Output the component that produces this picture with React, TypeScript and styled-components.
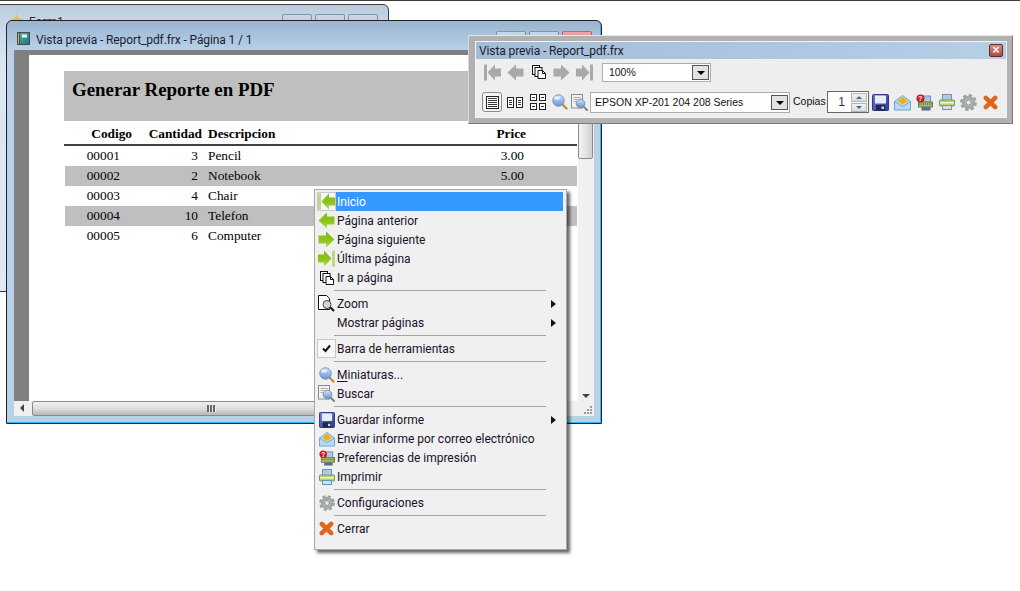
import React from "react";
import styled, { createGlobalStyle } from "styled-components";

const UI = `Roboto, "Open Sans", "Liberation Sans", sans-serif`;
const SANS = `"Liberation Sans", Arial, sans-serif`;
const SERIF = `"Liberation Serif", "Times New Roman", serif`;

const Global = createGlobalStyle`
  html, body { margin: 0; padding: 0; background: #fff; overflow: hidden; }
  * { box-sizing: border-box; }
`;

const Desktop = styled.div`
  position: relative;
  width: 1020px;
  height: 591px;
  overflow: hidden;
  background: #fff;
  font-family: ${UI};
  &::before { content: ""; position: absolute; left: 0; right: 0; top: 0; height: 1px; background: #3a3a3a; }
`;

const Defs = styled.svg`position: absolute; width: 0; height: 0;`;

/* Back window */
const BackWindow = styled.div`
  position: absolute;
  left: -8px; top: 4px; width: 397px; height: 288px;
  border: 1px solid #3c3c3c;
  border-radius: 6px 6px 0 0;
  background: linear-gradient(180deg, #bccbdc 0, #c9d8e8 18px, #d9e6f3 60px, #dde9f5 100%);
  display: flex;
  align-items: flex-start;
  padding: 9px 10px 0 17px;
`;
const BackIcon = styled.svg`width: 13px; height: 13px; flex: none;`;
const BackTitle = styled.span`margin-left: 6px; font-size: 12px; line-height: 16px; color: #333;`;
const CaptionButtons = styled.div<{ $lift?: number }>`
  margin-left: auto;
  margin-top: ${p => -(p.$lift ?? 0)}px;
  display: flex;
  gap: 3px;
  align-self: flex-start;
`;
const CaptionButton = styled.div<{ $close?: boolean }>`
  width: 30px; height: 19px;
  border: 1px solid ${p => (p.$close ? "#9a6a6a" : "#7f93a8")};
  border-top-color: ${p => (p.$close ? "#a87070" : "#8296ab")};
  border-radius: 2px 2px 3px 3px;
  background: ${p => (p.$close ? "linear-gradient(#e8a9a3, #d67a70)" : "linear-gradient(#c6d8ea, #a9c1da)")};
  display: flex; align-items: center; justify-content: center;
`;
const BackGlyph = styled.span`width: 10px; height: 8px; border: 1px solid #fff; border-top-width: 2px; margin-top: 3px;`;

/* Front window */
const FrontWindow = styled.div`
  position: absolute;
  left: 6px; top: 20px; width: 596px; height: 404px;
  border: 1px solid #222;
  border-radius: 6px 6px 0 0;
  background: linear-gradient(180deg, #9ab4d1 0, #b9d1e8 30px, #b9d1e8 100%);
  box-shadow: inset -1px -1px 0 #36b7e6;
  padding: 0 7px 7px;
  display: flex;
  flex-direction: column;
`;
const TitleBar = styled.div`
  height: 29px;
  flex: none;
  display: flex;
  align-items: flex-start;
  padding: 11px 2px 0 3px;
`;
const WindowTitle = styled.span`
  margin-left: 6px;
  font-size: 12px;
  line-height: 16px;
  letter-spacing: -0.11px;
  color: #1c1c30;
`;
const Client = styled.div`
  flex: 1;
  display: grid;
  grid-template-columns: 564px 16px;
  grid-template-rows: 351px 15px;
`;
const Viewport = styled.div`
  background: #808080;
  padding: 5px 0 0 15px;
  overflow: hidden;
`;
const Page = styled.div`
  height: 100%;
  background: #fff;
  padding: 16px 1px 0 35px;
`;
const Band = styled.div`
  height: 50px;
  background: #bfbfbf;
  padding: 8px 0 0 8px;
  font: bold 18.9px/21px ${SERIF};
  color: #000;
`;
const ReportRow = styled.div<{ $shaded?: boolean; $head?: boolean }>`
  display: grid;
  grid-template-columns: 68px 70px 294px 30px 1fr;
  height: ${p => (p.$head ? "25px" : "20px")};
  align-items: center;
  font: ${p => (p.$head ? "bold" : "normal")} 13.33px/16px ${SERIF};
  color: #000;
  background: ${p => (p.$shaded ? "#bfbfbf" : "#fff")};
  border-bottom: ${p => (p.$head ? "2px solid #404040" : "0")};
  margin-left: ${p => (p.$head ? "0" : "1px")};
  padding-top: ${p => (p.$head ? "2px" : "0")};
`;
const Cell = styled.span<{ $right?: boolean; $pad?: number; $lead?: number }>`
  text-align: ${p => (p.$right ? "right" : "left")};
  padding-right: ${p => p.$pad ?? 0}px;
  padding-left: ${p => p.$lead ?? 0}px;
`;
const VScroll = styled.div`
  background: #f0f0f0;
  display: flex;
  flex-direction: column;
  position: relative;
`;
const VThumb = styled.div`
  margin: 17px 0 0 0;
  height: 92px;
  width: 15px;
  border: 1px solid #8a8a8a;
  border-radius: 2px;
  background: linear-gradient(90deg, #f4f4f4, #e4e4e4 50%, #cfcfcf);
`;
const ScrollArrow = styled.span<{ $dir: "down" | "left" }>`
  width: 0; height: 0;
  ${p => p.$dir === "down"
    ? "border-left: 4px solid transparent; border-right: 4px solid transparent; border-top: 4px solid #444; margin: auto 0 3px 4px;"
    : "border-top: 4px solid transparent; border-bottom: 4px solid transparent; border-right: 4px solid #444; margin: 3px 0 0 6px;"}
`;
const HScroll = styled.div`
  background: #f0f0f0;
  display: flex;
  padding-right: 188px;
`;
const HThumb = styled.div`
  margin-left: 8px;
  flex: 1;
  height: 15px;
  border: 1px solid #8a8a8a;
  border-radius: 2px;
  background: linear-gradient(180deg, #f0f0f0, #dedede 50%, #b8b8b8);
  display: flex;
  justify-content: center;
  align-items: center;
  gap: 1px;
`;
const Grip = styled.i`display: block; width: 2px; height: 7px; background: #666; box-shadow: 1px 0 0 #eee;`;
const Corner = styled.div`
  background: #f0f0f0;
  display: flex;
  align-items: flex-end;
  justify-content: flex-end;
  padding: 0 1px 1px 0;
`;

/* Floating toolbar */
const ToolWindow = styled.div`
  position: absolute;
  left: 468px; top: 35px; width: 545px; height: 89px;
  background: #b1b1b1;
  border-right: 1px solid #7a7a7a;
  border-bottom: 1px solid #7a7a7a;
  border-top: 1px solid #e6e6e6;
  border-left: 1px solid #d8d8d8;
  padding: 6px 6px 6px 7px;
  display: flex;
  flex-direction: column;
`;
const ToolInner = styled.div`
  flex: 1;
  background: #eee;
  box-shadow: 0 0 0 1px #f4f4f4;
  display: flex;
  flex-direction: column;
`;
const ToolTitle = styled.div`
  height: 17px;
  flex: none;
  background: linear-gradient(90deg, #a3bcd8, #b6cfe7);
  display: flex;
  align-items: center;
  justify-content: space-between;
  padding: 0 3px;
  font-size: 12px;
  letter-spacing: -0.11px;
  color: #1c1c30;
`;
const ToolClose = styled.div`
  width: 14px; height: 13px;
  border: 1px solid #5a2f2c;
  border-radius: 2px;
  background: linear-gradient(#d88d84, #b5473e);
  display: flex; align-items: center; justify-content: center;
  color: #fff;
  font: bold 12px/9px ${SANS};
`;
const ToolRow = styled.div<{ $second?: boolean }>`
  display: flex;
  align-items: center;
  height: ${p => (p.$second ? "22px" : "20px")};
  margin-top: ${p => (p.$second ? "9px" : "3px")};
  padding-left: ${p => (p.$second ? "6px" : "8px")};
  gap: ${p => (p.$second ? "3px" : "6px")};
`;
const ToolIcon = styled.div<{ $active?: boolean; $w?: number }>`
  width: ${p => p.$w ?? 17}px;
  height: 20px;
  flex: none;
  display: flex;
  align-items: center;
  justify-content: center;
  border: ${p => (p.$active ? "1px solid #8a8a8a" : "0")};
  border-radius: 3px;
  background: ${p => (p.$active ? "#f2f2f2" : "transparent")};
`;
const Combo = styled.div<{ $w: number; $h: number; $gap?: number }>`
  width: ${p => p.$w}px;
  height: ${p => p.$h}px;
  margin-left: ${p => p.$gap ?? 0}px;
  flex: none;
  background: #fff;
  border: 1px solid #adadad;
  display: flex;
  align-items: center;
  justify-content: space-between;
  padding: 0 1px 0 3px;
  font: 10.5px/14px ${SANS};
  color: #111;
`;
const ComboWide = styled(Combo)`padding-left: 4px;`;
const DropButton = styled.div`
  width: 17px; height: 15px;
  border: 1px solid #555;
  background: #e2e2e2;
  display: flex; align-items: center; justify-content: center;
  padding-top: 2px;
  &::after { content: ""; border-left: 4px solid transparent; border-right: 4px solid transparent; border-top: 4px solid #000; }
`;
const CopiesLabel = styled.span`
  width: 32px;
  font: 10.5px/14px ${SANS};
  color: #111;
  flex: none;
  margin-top: -3px;
`;
const Spinner = styled.div`
  width: 42px; height: 22px;
  flex: none;
  margin-left: -1px;
  background: #fff;
  border: 1px solid #666;
  display: flex;
  align-items: center;
  justify-content: flex-end;
  font: 12px/14px ${SANS};
  color: #4a1a70;
  padding-right: 1px;
`;
const SpinValue = styled.span`margin-right: 6px;`;
const SpinStack = styled.div`display: flex; flex-direction: column; gap: 1px; width: 16px;`;
const SpinBtn = styled.div<{ $up?: boolean }>`
  height: 9px;
  background: linear-gradient(#f4f4f4, #dadada);
  border: 1px solid #b4b4b4;
  display: flex; align-items: center; justify-content: center;
  &::after {
    content: "";
    border-left: 3px solid transparent;
    border-right: 3px solid transparent;
    ${p => (p.$up ? "border-bottom: 3px solid #4a6a8a;" : "border-top: 3px solid #4a6a8a;")}
  }
`;
const ActionIcons = styled.div`
  display: flex;
  gap: 5px;
`;

/* Context menu */
const Menu = styled.div`
  position: absolute;
  left: 314px; top: 189px; width: 253px; height: 361px;
  background: #f0f0f0;
  border: 1px solid #a8a8a8;
  box-shadow: 3px 3px 3px rgba(0,0,0,.6);
  padding: 2px 3px 0 2px;
`;
const MenuRow = styled.div`
  height: 19px;
  display: flex;
  align-items: stretch;
`;
const MenuIconCell = styled.div<{ $boxed?: boolean }>`
  width: 19px;
  flex: none;
  display: flex;
  align-items: center;
  justify-content: center;
  border: ${p => (p.$boxed ? "1px solid #c9c9c9" : "0")};
  background: ${p => (p.$boxed ? "#f7f7f7" : "transparent")};
`;
const MenuLabel = styled.div<{ $active?: boolean }>`
  flex: 1;
  display: flex;
  align-items: center;
  justify-content: space-between;
  padding: 0 7px 0 1px;
  font-size: 12px;
  line-height: 16px;
  background: ${p => (p.$active ? "#3399ff" : "transparent")};
  color: ${p => (p.$active ? "#fff" : "#20102a")};
  u { text-underline-offset: 2px; }
`;
const SubCaret = styled.span`
  border-top: 4px solid transparent;
  border-bottom: 4px solid transparent;
  border-left: 5px solid #111;
`;
const MenuSep = styled.div`
  height: 7px;
  margin: 0 17px;
  display: flex;
  align-items: center;
  &::after { content: ""; flex: 1; height: 1px; background: #a4a4a4; }
`;

/* Icons */
type IconProps = { s?: number };
const NavArrow = ({ dir, bar, fill, barFill, s = 17 }: { dir: "l" | "r"; bar?: boolean; fill: string; barFill?: string; s?: number }) => (
  <svg width={s} height={s} viewBox="0 0 17 17">
    <g transform={dir === "l" ? "translate(17,0) scale(-1,1)" : undefined}>
      {bar ? (
        <>
          <polygon points="0,4.5 6,4.5 6,0.5 13.5,8.5 6,16.5 6,12.5 0,12.5" fill={fill} />
          <rect x="14" y="0.5" width="3" height="16" fill={barFill ?? fill} />
        </>
      ) : (
        <polygon points="0.5,4.5 8,4.5 8,0.5 16.5,8.5 8,16.5 8,12.5 0.5,12.5" fill={fill} />
      )}
    </g>
  </svg>
);
const GRAY = "#a9a9a9";
const GREEN = "url(#greenFill)";
const LIME = "#bcd88a";

const PagesIcon = ({ s = 14 }: IconProps) => (
  <svg width={s} height={s} viewBox="0 0 14 14" fill="#fff" stroke="#111" strokeWidth="1">
    <rect x="0.5" y="0.5" width="7" height="9" />
    <rect x="3" y="2.5" width="7" height="9" />
    <path d="M6 5.5h4.5l3 3v5h-7.5z" />
    <path d="M10.5 5.5v3h3" fill="none" />
  </svg>
);
const Glass = ({ s = 16 }: IconProps) => (
  <svg width={s} height={s} viewBox="0 0 16 16">
    <path d="M10.5 10.5l4 4" stroke="#c08a2a" strokeWidth="2.2" strokeLinecap="round" />
    <circle cx="6.5" cy="6.5" r="5.7" fill="url(#glassFill)" stroke="#6f93c6" strokeWidth="1" />
    <ellipse cx="5" cy="4" rx="3" ry="1.7" fill="#e4effa" />
  </svg>
);
const PreviewIcon = ({ s = 17 }: IconProps) => (
  <svg width={s} height={s} viewBox="0 0 17 17">
    <rect x="0.5" y="0.5" width="11" height="13.5" fill="#f2f2f2" stroke="#8a8a8a" />
    <path d="M2.5 3.5h7M2.5 5.5h4M2.5 7.5h3" stroke="#b0b0b0" />
    <path d="M12 12l4 4" stroke="#808080" strokeWidth="2" strokeLinecap="round" />
    <circle cx="9.5" cy="9.5" r="4.3" fill="url(#glassFill)" stroke="#7b8da6" />
  </svg>
);
const ZoomIcon = ({ s = 17 }: IconProps) => (
  <svg width={s} height={s} viewBox="0 0 17 17">
    <path d="M.5.5h8l3 3v11h-11z" fill="#fff" stroke="#111" />
    <path d="M12 12l4 4" stroke="#111" strokeWidth="2" />
    <circle cx="9" cy="9.5" r="4" fill="#cfd6dd" stroke="#444" />
  </svg>
);
const SaveIcon = ({ s = 17 }: IconProps) => (
  <svg width={s} height={s} viewBox="0 0 17 17">
    <rect x="0.5" y="0.5" width="16" height="16" rx="1" fill="url(#saveFill)" stroke="#2f3585" />
    <rect x="3" y="1.5" width="11" height="8" fill="#e8eef8" />
    <rect x="4" y="11" width="9" height="5.5" fill="#20264f" />
    <rect x="9.5" y="12.5" width="2.5" height="2.5" fill="#cfd3e6" />
  </svg>
);
const MailIcon = ({ s = 17 }: IconProps) => (
  <svg width={s} height={s} viewBox="0 0 17 17">
    <path d="M.5 7.500l8-6 8 6v8.500h-16z" fill="#bcd9f2" stroke="#6fa3d4" />
    <path d="M3.500 7l5-4 5 4-5 3.500z" fill="#f5b000" />
    <path d="M.5 7.500l8 5 8-5" fill="none" stroke="#6fa3d4" />
  </svg>
);
const PrinterIcon = ({ s = 16 }: IconProps) => (
  <svg width={s} height={s} viewBox="0 0 16 16">
    <rect x="3.500" y="0.500" width="9" height="6" fill="#a9cbe8" stroke="#6c93b8" />
    <rect x="0.500" y="6" width="15" height="6" rx="1" fill="#b8d45e" stroke="#7d8f8a" />
    <rect x="1" y="8" width="14" height="1.500" fill="#eef6cf" />
    <rect x="3.500" y="11.500" width="9" height="4" fill="#cfe0ef" stroke="#6c93b8" />
  </svg>
);
const PrefsIcon = ({ s = 17 }: IconProps) => (
  <svg width={s} height={s} viewBox="0 0 17 17">
    <rect x="5.500" y="2" width="9" height="6" fill="#a9cbe8" stroke="#6c93b8" />
    <rect x="2.500" y="8" width="14" height="5" fill="#a4bd5a" stroke="#6d7b6a" />
    <path d="M3 10h13" stroke="#4c5f45" strokeDasharray="1 1" />
    <rect x="5.500" y="13" width="9" height="3.500" fill="#5d6f88" />
    <circle cx="4.500" cy="4.500" r="4" fill="#d8141c" />
    <text x="4.500" y="7" textAnchor="middle" fontSize="7" fontWeight="700" fill="#fff" fontFamily="Liberation Sans">?</text>
  </svg>
);
const GearIcon = ({ s = 17 }: IconProps) => (
  <svg width={s} height={s} viewBox="0 0 17 17">
    <circle cx="8.500" cy="8.500" r="6.700" fill="none" stroke="#9aa0a0" strokeWidth="3.400" strokeDasharray="3 2.260" />
    <circle cx="8.500" cy="8.500" r="5" fill="none" stroke="#a3a8a8" strokeWidth="3.400" />
    <circle cx="8.500" cy="8.500" r="2.700" fill="#e6e8e8" stroke="#808686" />
  </svg>
);
const CloseIcon = ({ s = 15 }: IconProps) => (
  <svg width={s} height={s} viewBox="0 0 16 16">
    <path d="M3 3l10 10M13 3L3 13" stroke="#e2641a" strokeWidth="4.800" strokeLinecap="round" />
  </svg>
);
const CheckIcon = () => (
  <svg width="11" height="11" viewBox="0 0 11 11">
    <path d="M2 5.500l2.500 2.500L9 2.500" fill="none" stroke="#111" strokeWidth="2" />
  </svg>
);
const GripDots = () => (
  <svg width="10" height="10" viewBox="0 0 10 10" fill="#999">
    <rect x="7" y="1" width="2" height="2" />
    <rect x="4" y="4" width="2" height="2" />
    <rect x="7" y="4" width="2" height="2" />
    <rect x="1" y="7" width="2" height="2" />
    <rect x="4" y="7" width="2" height="2" />
    <rect x="7" y="7" width="2" height="2" />
  </svg>
);
const PageLayout = ({ cols, rows }: { cols: number; rows: number }) => {
  const w = cols === 1 ? 13 : 7;
  const h = rows === 2 ? 7 : cols === 1 ? 13 : 11;
  const cells: React.ReactNode[] = [];
  const totalH = rows * h + (rows - 1) * 2;
  for (let c = 0; c < cols; c++)
    for (let r = 0; r < rows; r++) {
      const x = 0.5 + c * (w + 2);
      const y = 0.5 + r * (h + 2);
      cells.push(<rect key={`${c}${r}`} x={x} y={y} width={w - 1} height={h - 1} fill="#fff" stroke="#222" />);
      const lines = rows === 2 ? [3] : cols === 1 ? [2, 4, 6, 8, 10] : [3, 5, 7];
      lines.forEach(l =>
        cells.push(<path key={`${c}${r}${l}`} d={`M${x + 1.5} ${y + l}h${w - 4}`} stroke="#333" />)
      );
    }
  const totalW = cols === 1 ? 13 : 16;
  return (
    <svg width={totalW} height={totalH} viewBox={`0 0 ${totalW} ${totalH}`}>
      {cells}
    </svg>
  );
};
const BookIcon = () => (
  <svg width="13" height="13" viewBox="0 0 13 13">
    <rect x="0.500" y="0.500" width="12" height="12" fill="url(#bookFill)" stroke="#40504a" />
    <rect x="0.500" y="0.500" width="2" height="12" fill="#c8b94a" stroke="#40504a" />
    <rect x="5" y="2.500" width="5" height="3" fill="#eef4f4" />
  </svg>
);

type Item =
  | { sep: true }
  | { sep?: false; icon?: React.ReactNode; label: React.ReactNode; active?: boolean; sub?: boolean; boxed?: boolean };

const menu: Item[] = [
  { icon: <NavArrow dir="l" bar fill={GREEN} barFill={LIME} s={17} />, label: "Inicio", active: true, boxed: true },
  { icon: <NavArrow dir="l" fill={GREEN} />, label: "Página anterior" },
  { icon: <NavArrow dir="r" fill={GREEN} />, label: "Página siguiente" },
  { icon: <NavArrow dir="r" bar fill={GREEN} barFill={LIME} />, label: "Última página" },
  { icon: <PagesIcon />, label: "Ir a página" },
  { sep: true },
  { icon: <ZoomIcon />, label: "Zoom", sub: true },
  { label: "Mostrar páginas", sub: true },
  { sep: true },
  { icon: <CheckIcon />, label: "Barra de herramientas", boxed: true },
  { sep: true },
  { icon: <Glass />, label: <><u>M</u>iniaturas...</> },
  { icon: <PreviewIcon />, label: "Buscar" },
  { sep: true },
  { icon: <SaveIcon s={16} />, label: "Guardar informe", sub: true },
  { icon: <MailIcon s={16} />, label: "Enviar informe por correo electrónico" },
  { icon: <PrefsIcon s={16} />, label: "Preferencias de impresión" },
  { icon: <PrinterIcon />, label: "Imprimir" },
  { sep: true },
  { icon: <GearIcon s={16} />, label: "Configuraciones" },
  { sep: true },
  { icon: <CloseIcon />, label: "Cerrar" },
];

const rows = [
  ["00001", "3", "Pencil", "3.00"],
  ["00002", "2", "Notebook", "5.00"],
  ["00003", "4", "Chair", ""],
  ["00004", "10", "Telefon", ""],
  ["00005", "6", "Computer", ""],
];

export default function App() {
  return (
    <Desktop>
      <Global />
      <Defs aria-hidden="true">
        <defs>
          <linearGradient id="greenFill" x1="0" y1="0" x2="0" y2="1">
            <stop offset="0" stopColor="#7fb814" />
            <stop offset="0.6" stopColor="#8fc61f" />
            <stop offset="1" stopColor="#b7dc56" />
          </linearGradient>
          <linearGradient id="glassFill" x1="0" y1="0" x2="0" y2="1">
            <stop offset="0" stopColor="#d3e4f6" />
            <stop offset="1" stopColor="#5f93d6" />
          </linearGradient>
          <linearGradient id="saveFill" x1="0" y1="0" x2="1" y2="1">
            <stop offset="0" stopColor="#6f78d8" />
            <stop offset="1" stopColor="#2e3a94" />
          </linearGradient>
          <linearGradient id="bookFill" x1="0" y1="0" x2="1" y2="1">
            <stop offset="0" stopColor="#62b3ae" />
            <stop offset="1" stopColor="#1c6f78" />
          </linearGradient>
        </defs>
      </Defs>

      <BackWindow>
        <BackIcon viewBox="0 0 13 13">
          <path d="M1 5l4-1 1.500-4 1.500 4 4 1v8H1z" fill="#e9b949" />
        </BackIcon>
        <BackTitle>Form1</BackTitle>
        <CaptionButtons>
          <CaptionButton />
          <CaptionButton><BackGlyph /></CaptionButton>
          <CaptionButton><BackGlyph /></CaptionButton>
        </CaptionButtons>
      </BackWindow>

      <FrontWindow>
        <TitleBar>
          <BookIcon />
          <WindowTitle>Vista previa - Report_pdf.frx - Página 1 / 1</WindowTitle>
          <CaptionButtons $lift={1}>
            <CaptionButton />
            <CaptionButton />
            <CaptionButton $close />
          </CaptionButtons>
        </TitleBar>
        <Client>
          <Viewport>
            <Page>
              <Band>Generar Reporte en PDF</Band>
              <ReportRow $head>
                <Cell $right>Codigo</Cell>
                <Cell $right>Cantidad</Cell>
                <Cell $lead={6}>Descripcion</Cell>
                <Cell $right>Price</Cell>
              </ReportRow>
              {rows.map((r, i) => (
                <ReportRow key={r[0]} $shaded={i % 2 === 1}>
                  <Cell $right $pad={13}>{r[0]}</Cell>
                  <Cell $right $pad={5}>{r[1]}</Cell>
                  <Cell $lead={5}>{r[2]}</Cell>
                  <Cell $right $pad={3}>{r[3]}</Cell>
                </ReportRow>
              ))}
            </Page>
          </Viewport>
          <VScroll>
            <VThumb />
            <ScrollArrow $dir="down" />
          </VScroll>
          <HScroll>
            <ScrollArrow $dir="left" />
            <HThumb>
              <Grip /><Grip /><Grip />
            </HThumb>
          </HScroll>
          <Corner><GripDots /></Corner>
        </Client>
      </FrontWindow>

      <ToolWindow>
        <ToolInner>
          <ToolTitle>
            <span>Vista previa - Report_pdf.frx</span>
            <ToolClose>×</ToolClose>
          </ToolTitle>
          <ToolRow>
            <ToolIcon><NavArrow dir="l" bar fill={GRAY} /></ToolIcon>
            <ToolIcon><NavArrow dir="l" fill={GRAY} /></ToolIcon>
            <ToolIcon><PagesIcon /></ToolIcon>
            <ToolIcon><NavArrow dir="r" fill={GRAY} /></ToolIcon>
            <ToolIcon><NavArrow dir="r" bar fill={GRAY} /></ToolIcon>
            <Combo $w={109} $h={19} $gap={3}>
              <span>&nbsp;100%</span>
              <DropButton />
            </Combo>
          </ToolRow>
          <ToolRow $second>
            <ToolIcon $active $w={20}><PageLayout cols={1} rows={1} /></ToolIcon>
            <ToolIcon $w={20}><PageLayout cols={2} rows={1} /></ToolIcon>
            <ToolIcon $w={20}><PageLayout cols={2} rows={2} /></ToolIcon>
            <ToolIcon><Glass /></ToolIcon>
            <ToolIcon><PreviewIcon /></ToolIcon>
            <ComboWide $w={200} $h={21} $gap={-1}>
              <span>EPSON XP-201 204 208 Series</span>
              <DropButton />
            </ComboWide>
            <CopiesLabel>Copias</CopiesLabel>
            <Spinner>
              <SpinValue>1</SpinValue>
              <SpinStack>
                <SpinBtn $up />
                <SpinBtn />
              </SpinStack>
            </Spinner>
            <ActionIcons>
              <ToolIcon><SaveIcon /></ToolIcon>
              <ToolIcon><MailIcon /></ToolIcon>
              <ToolIcon><PrefsIcon /></ToolIcon>
              <ToolIcon><PrinterIcon /></ToolIcon>
              <ToolIcon><GearIcon /></ToolIcon>
              <ToolIcon><CloseIcon /></ToolIcon>
            </ActionIcons>
          </ToolRow>
        </ToolInner>
      </ToolWindow>

      <Menu>
        {menu.map((m, i) =>
          m.sep ? (
            <MenuSep key={i} />
          ) : (
            <MenuRow key={i}>
              <MenuIconCell $boxed={m.boxed}>{m.icon}</MenuIconCell>
              <MenuLabel $active={m.active}>
                <span>{m.label}</span>
                {m.sub && <SubCaret />}
              </MenuLabel>
            </MenuRow>
          )
        )}
      </Menu>
    </Desktop>
  );
}
